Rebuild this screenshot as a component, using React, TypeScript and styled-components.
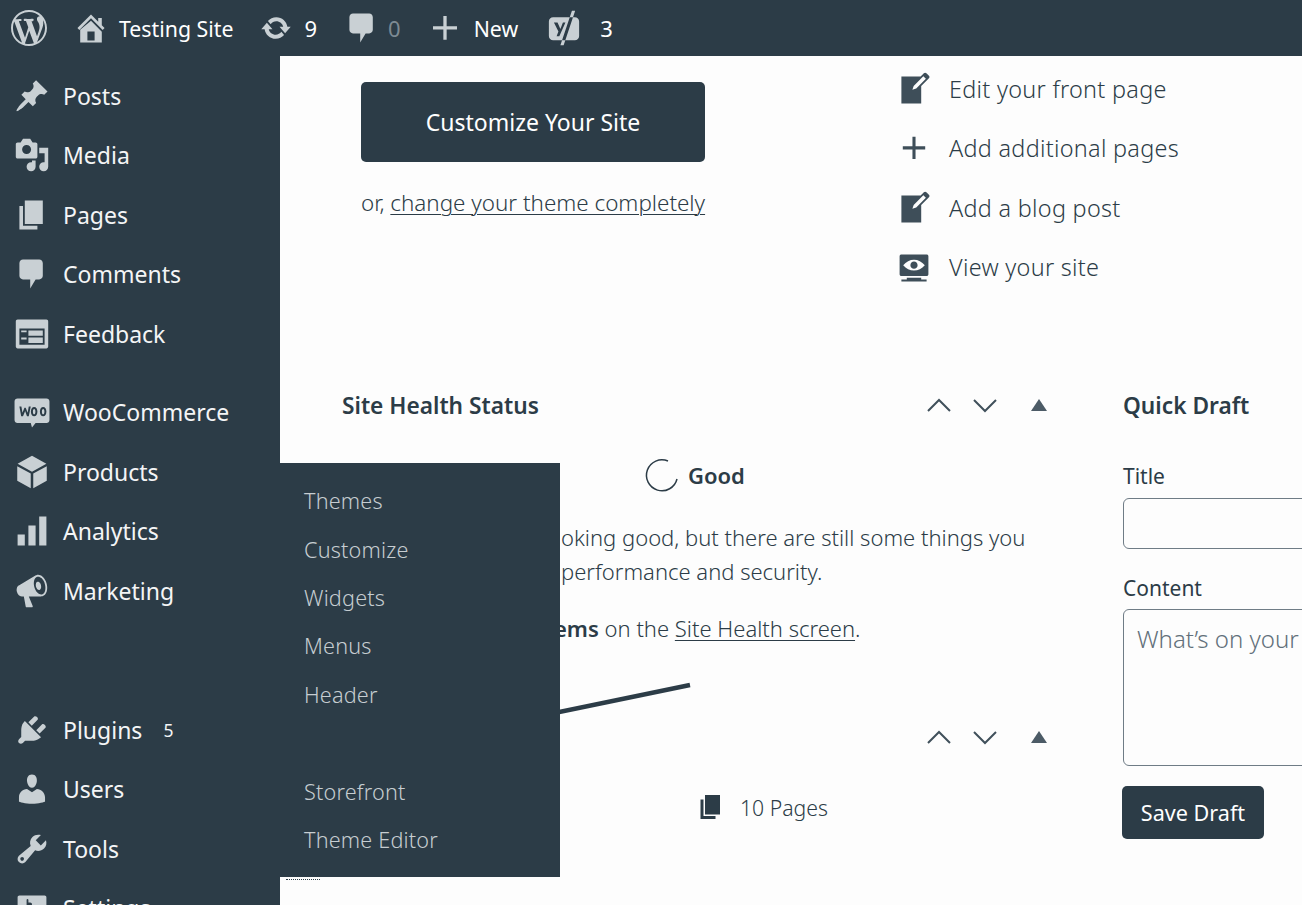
import React from "react";
import styled, { createGlobalStyle } from "styled-components";

const DARK = "#2c3c47";
const PAPER = "#fdfdfd";

const GlobalStyle = createGlobalStyle`
  html, body {
    margin: 0;
    padding: 0;
    height: 905px;
    overflow: hidden;
    background: ${PAPER};
    font-family: "Noto Sans", "Open Sans", sans-serif;
    color: ${DARK};
  }
  * { box-sizing: border-box; }
`;

const icons: Record<string, string> = {
  wp: "M20 10c0-5.51-4.49-10-10-10C4.48 0 0 4.49 0 10c0 5.52 4.48 10 10 10 5.51 0 10-4.48 10-10zM7.78 15.37L4.37 6.22c.55-.02 1.17-.08 1.17-.08.5-.06.44-1.13-.06-1.11 0 0-1.45.11-2.37.11-.18 0-.37 0-.58-.01C4.12 2.69 6.87 1.11 10 1.11c2.33 0 4.45.87 6.05 2.34-.68-.11-1.65.39-1.65 1.58 0 .74.45 1.36.9 2.1.35.61.55 1.36.55 2.46 0 1.49-1.4 5-1.4 5l-3.03-8.37c.54-.02.82-.17.82-.17.5-.05.44-1.25-.06-1.22 0 0-1.44.12-2.38.12-.87 0-2.33-.12-2.33-.12-.5-.03-.56 1.2-.06 1.22l.92.08 1.26 3.41zM17.41 10c.24-.64.74-1.87.43-4.25.7 1.29 1.05 2.71 1.05 4.25 0 3.29-1.73 6.24-4.4 7.78.97-2.59 1.94-5.2 2.92-7.78zM6.1 18.09C3.12 16.65 1.11 13.53 1.11 10c0-1.3.23-2.48.72-3.59C3.25 10.3 4.67 14.2 6.1 18.09zm4.03-6.63l2.58 6.98c-.86.29-1.76.45-2.71.45-.79 0-1.57-.11-2.29-.33.81-2.38 1.62-4.74 2.42-7.1z",
  home: "M16 8.5l1.53 1.53-1.06 1.06L10 4.62l-6.47 6.47-1.06-1.06L10 2.5l4 4v-2h2v4zm-6-2.46l6 5.99V18H4v-6.97zM12 17v-5H8v5h4z",
  update: "M10.2 3.28c3.53 0 6.43 2.61 6.92 6h2.08l-3.5 4-3.5-4h2.32c-.45-1.97-2.21-3.45-4.32-3.45-1.45 0-2.73.71-3.54 1.78L4.95 5.66C6.23 4.2 8.11 3.28 10.2 3.28zm-.4 13.44c-3.52 0-6.43-2.61-6.92-6H.8l3.5-4c1.17 1.33 2.33 2.67 3.5 4H5.48c.45 1.97 2.21 3.45 4.32 3.45 1.45 0 2.73-.71 3.54-1.78l1.71 1.95c-1.28 1.46-3.15 2.38-5.25 2.38z",
  comment: "M5 2h9c1.1 0 2 .9 2 2v7c0 1.1-.9 2-2 2h-2l-3 5v-5H5c-1.1 0-2-.9-2-2V4c0-1.1.9-2 2-2z",
  plus: "M18 8.8v2.2h-6.9v6.8H8.9V11H2V8.8h6.9V2h2.2v6.8z",
  yoast: "M4 4h12c1.4 0 2.4 1 2.4 2.4v8c0 1.4-1 2.4-2.4 2.4H4c-1.4 0-2.4-1-2.4-2.4v-8C1.6 5 2.6 4 4 4zM14.4.4h1.8L9.8 19.6H8zM4.4 7h2l1.6 3.6L9.4 7h1.4L7.4 14.6H5.9l1-2.6z",
  post: "M10.44 3.02l1.82-1.82 6.36 6.35-1.83 1.82c-1.05-.68-2.48-.57-3.41.36l-.75.75c-.92.93-1.04 2.35-.35 3.41l-1.83 1.82-2.41-2.41-2.8 2.79c-.42.42-3.38 2.71-3.8 2.29s1.86-3.39 2.28-3.81l2.79-2.79L4.1 9.36l1.83-1.82c1.05.69 2.48.57 3.4-.36l.75-.75c.93-.92 1.05-2.35.36-3.41z",
  media: "M13 11V4c0-.55-.45-1-1-1h-1.67L9 1H5L3.67 3H2c-.55 0-1 .45-1 1v7c0 .55.45 1 1 1h10c.55 0 1-.45 1-1zM7 4.5c1.38 0 2.5 1.12 2.5 2.5S8.38 9.5 7 9.5 4.5 8.38 4.5 7 5.62 4.5 7 4.5zM14 6h5v10.5c0 1.38-1.12 2.5-2.5 2.5S14 17.88 14 16.5s1.12-2.5 2.5-2.5c.17 0 .34.02.5.05V9h-3V6zm-4 8.05V13h2v3.5c0 1.38-1.12 2.5-2.5 2.5S7 17.88 7 16.5 8.12 14 9.5 14c.17 0 .34.02.5.05z",
  page: "M6 15V2h10v13H6zm-1 1h8v2H3V5h2v11z",
  feedback: "M2 2h16c.55 0 1 .45 1 1v14c0 .55-.45 1-1 1H2c-.55 0-1-.45-1-1V3c0-.55.45-1 1-1zm15 14V7H3v9h14zM4 8v1h3V8H4zm4 0v3h8V8H8zm-4 4v1h3v-1H4zm4 0v3h8v-3H8z",
  woo: "M2 2.5h16c1 0 1.7.7 1.7 1.7v10.2c0 1-.7 1.7-1.7 1.7h-6L10 18.6 9.3 16.1H2c-1 0-1.7-.7-1.7-1.7V4.2C.3 3.2 1 2.5 2 2.5zM3 7l1 5.4h1l1.2-3 1 3h1L9.3 7H8.2l-.6 3.4L6.5 7.6h-.7L4.7 10.4 4.1 7zm8.2.2c-1.1 0-1.8 1-1.8 2.5 0 1.6.7 2.7 1.8 2.7s1.8-1.1 1.8-2.7c0-1.5-.7-2.5-1.8-2.5zm0 1.1c.4 0 .7.6.7 1.5s-.3 1.5-.7 1.5-.7-.6-.7-1.5.3-1.5.7-1.5zm5 -1.1c-1.1 0-1.8 1-1.8 2.5 0 1.6.7 2.7 1.8 2.7s1.8-1.1 1.8-2.7c0-1.5-.7-2.5-1.8-2.5zm0 1.1c.4 0 .7.6.7 1.5s-.3 1.5-.7 1.5-.7-.6-.7-1.5.3-1.5.7-1.5z",
  products: "M10 1l8 4.4-8 4.4-8-4.4zM1.8 6.8l7.5 4.1V19l-7.5-4.1zM18.2 6.8v8.1L10.7 19v-8.1z",
  chart: "M18 18V2h-4v16h4zm-6 0V7H8v11h4zm-6 0v-6H2v6h4z",
  megaphone: "M18.15 5.94c.46 1.62.38 3.22-.02 4.48-.42 1.28-1.26 2.18-2.3 2.48-.16.06-.26.06-.4.06-.06.02-.12.02-.18.02-.06.02-.14.02-.22.02h-6.8l2.22 5.5c.02.14-.06.26-.14.34-.08.1-.24.16-.34.16H6.95c-.1 0-.26-.06-.34-.16-.08-.08-.16-.2-.14-.34l-1-5.5H4.25l-.02-.02c-.5.06-1.08-.18-1.54-.62s-.88-1.08-1.06-1.88c-.24-.8-.2-1.56-.02-2.2.18-.62.58-1.08 1.06-1.3l.02-.02 9-5.4c.1-.06.18-.1.24-.16.06-.04.14-.08.24-.12.16-.08.28-.12.5-.18 1.04-.3 2.24.1 3.22.98s1.84 2.24 2.26 3.86zm-2.58 5.98h-.02c.4-.1.74-.34 1.04-.7.58-.7.86-1.76.86-3.04-.02-.64-.1-1.3-.28-1.98-.34-1.36-1.02-2.5-1.78-3.24s-1.68-1.1-2.46-.88c-.82.22-1.4.96-1.7 2-.32 1.04-.28 2.36.06 3.72.38 1.36 1 2.5 1.8 3.24.78.74 1.62 1.1 2.48.88zm-2.54-7.08c.22-.04.42-.02.62.04.38.16.76.48 1.02 1s.42 1.2.42 1.78c0 .3-.04.56-.12.8-.18.48-.44.84-.86.94-.34.1-.8-.06-1.14-.4s-.64-.86-.78-1.5c-.18-.62-.12-1.24.02-1.72s.48-.84.82-.94z",
  plugin: "M13.11 4.36L9.87 7.6 8 5.73l3.24-3.24c.35-.34 1.05-.2 1.56.32.52.51.66 1.21.31 1.55zm-8 1.77l.91-1.12 9.01 9.01-1.19.84c-.71.71-2.63 1.16-3.82 1.16H6.14L4.9 17.26c-.59.59-1.54.59-2.12 0-.59-.58-.59-1.53 0-2.12l1.24-1.24v-3.88c0-1.13.4-3.19 1.09-3.89zm7.26 3.97l3.24-3.24c.34-.35 1.04-.21 1.55.31.52.51.66 1.21.31 1.55l-3.24 3.25z",
  users: "M10 9.25c-2.27 0-2.73-3.44-2.73-3.44C7 4.02 7.82 2 9.97 2c2.16 0 2.98 2.02 2.71 3.81 0 0-.41 3.44-2.68 3.44zm0 2.57L12.72 10c2.39 0 4.52 2.33 4.52 4.53v2.49s-3.65 1.13-7.24 1.13c-3.65 0-7.24-1.13-7.24-1.13v-2.49c0-2.25 1.94-4.48 4.47-4.48z",
  tools: "M16.68 9.77c-1.34 1.34-3.3 1.67-4.95.99l-5.41 6.52c-.99.99-2.59.99-3.58 0s-.99-2.59 0-3.57l6.52-5.42c-.68-1.65-.35-3.61.99-4.95 1.28-1.28 3.12-1.62 4.72-1.06l-2.89 2.89 2.82 2.82 2.86-2.87c.53 1.58.18 3.39-1.08 4.65zM3.81 16.21c.4.39 1.04.39 1.43 0 .4-.4.4-1.04 0-1.43-.39-.4-1.03-.4-1.43 0-.39.39-.39 1.03 0 1.43z",
  settings: "M18 16V4c0-.55-.45-1-1-1H3c-.55 0-1 .45-1 1v12c0 .55.45 1 1 1h14c.55 0 1-.45 1-1zM8 11h1c.55 0 1 .45 1 1s-.45 1-1 1H8v1.5c0 .28-.22.5-.5.5s-.5-.22-.5-.5V13H6c-.55 0-1-.45-1-1s.45-1 1-1h1V5.5c0-.28.22-.5.5-.5s.5.22.5.5V7h1c.55 0 1 .45 1 1s-.45 1-1 1h-1v5.5c0 .28-.22.5-.5.5s-.5-.22-.5-.5V9z",
  write: "M16.89 1.2l1.41 1.41c.39.39.39 1.02 0 1.41L14 8.33V18H3V3h10.67l1.8-1.8c.4-.39 1.03-.4 1.42 0zm-5.66 8.48l5.37-5.36-1.42-1.42-5.36 5.37-.71 2.12z",
  view: "M18 14V4c0-.55-.45-1-1-1H3c-.55 0-1 .45-1 1v10c0 .55.45 1 1 1h14c.55 0 1-.45 1-1zm-8-8c2.3 0 4.4 1.14 6 3-1.6 1.86-3.7 3-6 3s-4.4-1.14-6-3c1.6-1.86 3.7-3 6-3zm2 3c0-1.1-.9-2-2-2s-2 .9-2 2 .9 2 2 2 2-.9 2-2zm2 8h3v1H3v-1h3v-1h8v1z",
};

const Glyph = styled.svg<{ $size?: number }>`
  width: ${(p) => p.$size ?? 36}px;
  height: ${(p) => p.$size ?? 36}px;
  flex: none;
  fill: currentColor;
`;

const Icon = ({ name, size }: { name: string; size?: number }) => (
  <Glyph viewBox="0 0 20 20" $size={size} aria-hidden="true">
    <path fillRule="evenodd" d={icons[name]} />
  </Glyph>
);

const Page = styled.div`
  position: relative;
  width: 1302px;
  height: 905px;
  overflow: hidden;
  display: flex;
  flex-direction: column;
`;

const TopBar = styled.header`
  flex: none;
  height: 56px;
  padding-left: 11px;
  display: flex;
  align-items: center;
  background: ${DARK};
  color: #fff;
  font-size: 21.3px;
`;

const BarItem = styled.div<{ $gap?: number; $after: number }>`
  display: flex;
  align-items: center;
  gap: ${(p) => p.$gap ?? 10}px;
  margin-right: ${(p) => p.$after}px;
  color: #c9d0d4;
`;

const BarLabel = styled.span`
  color: #fff;
`;

const BarCount = styled.span<{ $dim?: boolean }>`
  min-width: 12px;
  color: ${(p) => (p.$dim ? "#7d8a93" : "#fff")};
  font-size: 22px;
`;

const Body = styled.div`
  flex: 1;
  min-height: 0;
  display: flex;
`;

const Sidebar = styled.nav`
  flex: none;
  width: 280px;
  padding: 9.8px 0 0 14px;
  background: ${DARK};
  overflow: hidden;
`;

const NavRow = styled.div<{ $top?: number }>`
  height: 59.5px;
  margin-top: ${(p) => p.$top ?? 0}px;
  display: flex;
  align-items: center;
  gap: 13px;
  color: #f4f5f6;
  font-size: 23px;
`;

const NavIconSlot = styled.span`
  display: flex;
  color: #c9d0d4;
`;

const NavBadge = styled.span`
  margin-left: 8px;
  font-size: 17.5px;
`;

const Flyout = styled.div`
  position: absolute;
  top: 463px;
  left: 280px;
  width: 280px;
  padding: 13.5px 0 13.5px 24px;
  background: ${DARK};
  z-index: 2;
`;

const FlyoutLink = styled.div<{ $top?: number }>`
  height: 48.4px;
  margin-top: ${(p) => p.$top ?? 0}px;
  display: flex;
  align-items: center;
  color: #c6cdd1;
  font-size: 21.6px;
  font-weight: 300;
  letter-spacing: 0.2px;
`;

const Main = styled.main`
  flex: 1;
  min-width: 0;
  display: flex;
  flex-direction: column;
  overflow: hidden;
  background: ${PAPER};
`;

const Welcome = styled.section`
  flex: none;
  height: 329px;
  display: flex;
`;

const WelcomeLeft = styled.div`
  width: 344px;
  margin-left: 81px;
  padding-top: 26px;
`;

const CustomizeButton = styled.button`
  display: block;
  width: 344px;
  height: 80px;
  border: 0;
  border-radius: 5px;
  background: ${DARK};
  color: #fff;
  font: inherit;
  font-size: 23px;
`;

const OrLine = styled.p`
  margin: 25px 0 0;
  font-size: 22.4px;
  font-weight: 300;
  line-height: 32px;
  white-space: nowrap;
`;

const TextLink = styled.a`
  color: ${DARK};
  text-decoration: underline;
  text-decoration-thickness: 1px;
  text-underline-offset: 3px;
`;

const ActionList = styled.ul`
  list-style: none;
  margin: 3.3px 0 0 191px;
  padding: 0;
`;

const ActionRow = styled.li`
  height: 59.4px;
  display: flex;
  align-items: center;
  gap: 17px;
  font-size: 23.4px;
  font-weight: 300;
  letter-spacing: 0.3px;
`;

const ActionIcon = styled.span`
  flex: none;
  width: 36px;
  display: flex;
  justify-content: center;
  color: #3e4e59;
`;

const Widgets = styled.section`
  flex: 1;
  display: flex;
  gap: 76px;
  padding-left: 62px;
`;

const HealthColumn = styled.div`
  flex: none;
  width: 705px;
`;

const WidgetHeader = styled.div`
  height: 40px;
  display: flex;
  align-items: center;
`;

const WidgetTitle = styled.h2`
  margin: 0;
  font-size: 22.7px;
  font-weight: 600;
`;

const HeaderControls = styled.div`
  margin-left: auto;
  display: flex;
  align-items: center;
  gap: 20px;
`;

const ControlGlyph = styled.svg`
  width: 26px;
  height: 18px;
  fill: none;
  stroke: #40505b;
  stroke-width: 2;
`;

const TriangleGlyph = styled.svg`
  width: 16px;
  height: 12px;
  margin-left: 13px;
  fill: #4c5b66;
`;

const GoodRow = styled.div`
  height: 40px;
  margin-top: 30px;
  padding-left: 302px;
  display: flex;
  align-items: center;
  gap: 8px;
  font-size: 22px;
  font-weight: 600;
`;

const Ring = styled.svg`
  width: 36px;
  height: 36px;
  fill: none;
  stroke: ${DARK};
  stroke-width: 1.5;
`;

const HealthText = styled.p<{ $top?: number; $inset: number }>`
  margin: ${(p) => p.$top ?? 0}px 0 0;
  padding-left: ${(p) => p.$inset}px;
  font-size: 22px;
  line-height: 34px;
  font-weight: 300;
  white-space: nowrap;
`;

const Strong = styled.strong`
  font-weight: 600;
`;

const ChartLine = styled.svg`
  display: block;
  width: 360px;
  height: 37px;
  margin-top: 35px;
  stroke: ${DARK};
  stroke-width: 4.5;
`;

const GlanceRow = styled.div`
  height: 40px;
  margin-top: 30px;
  padding-left: 354px;
  display: flex;
  align-items: center;
  gap: 14px;
  font-size: 21.2px;
  font-weight: 300;
`;

const DraftColumn = styled.div`
  flex: 1;
  min-width: 0;
`;

const FieldLabel = styled.label<{ $top: number }>`
  display: block;
  margin-top: ${(p) => p.$top}px;
  font-size: 21px;
  line-height: 30px;
`;

const TitleInput = styled.input`
  display: block;
  width: 400px;
  height: 51px;
  margin-top: 7px;
  border: 1px solid #6f7c86;
  border-radius: 6px;
  background: ${PAPER};
`;

const ContentInput = styled.textarea`
  display: block;
  width: 400px;
  height: 157px;
  margin-top: 6px;
  padding: 13px 13px;
  border: 1px solid #6f7c86;
  border-radius: 6px;
  background: ${PAPER};
  font: inherit;
  font-size: 24px;
  font-weight: 300;
  line-height: 32px;
  resize: none;
  &::placeholder {
    color: #62707a;
    opacity: 1;
  }
`;

const SaveButton = styled.button`
  display: block;
  width: 142px;
  height: 53px;
  margin: 20px 0 0 -1px;
  border: 0;
  border-radius: 5px;
  background: ${DARK};
  color: #fff;
  font: inherit;
  font-size: 21.6px;
`;

const ClippedMark = styled.div`
  position: absolute;
  top: 879px;
  left: 286px;
  width: 34px;
  height: 1px;
  border-top: 1px dotted ${DARK};
`;

const nav = [
  { label: "Posts", icon: "post" },
  { label: "Media", icon: "media" },
  { label: "Pages", icon: "page" },
  { label: "Comments", icon: "comment" },
  { label: "Feedback", icon: "feedback" },
  { label: "WooCommerce", icon: "woo", top: 19 },
  { label: "Products", icon: "products" },
  { label: "Analytics", icon: "chart" },
  { label: "Marketing", icon: "megaphone" },
  { label: "Plugins", icon: "plugin", top: 79.5, badge: "5" },
  { label: "Users", icon: "users" },
  { label: "Tools", icon: "tools" },
  { label: "Settings", icon: "settings" },
];

const flyout = [
  { label: "Themes" },
  { label: "Customize" },
  { label: "Widgets" },
  { label: "Menus" },
  { label: "Header" },
  { label: "Storefront", top: 48.4 },
  { label: "Theme Editor" },
];

const actions = [
  { label: "Edit your front page", icon: "write" },
  { label: "Add additional pages", icon: "plus", size: 28 },
  { label: "Add a blog post", icon: "write" },
  { label: "View your site", icon: "view" },
];

const Controls = () => (
  <HeaderControls>
    <ControlGlyph viewBox="0 0 26 18"><path d="M2 15 L13 4 L24 15" /></ControlGlyph>
    <ControlGlyph viewBox="0 0 26 18"><path d="M2 4 L13 15 L24 4" /></ControlGlyph>
    <TriangleGlyph viewBox="0 0 16 12"><path d="M8 0 L16 12 H0 Z" /></TriangleGlyph>
  </HeaderControls>
);

export default function App() {
  return (
    <Page>
      <GlobalStyle />
      <TopBar>
        <BarItem $after={26}><Icon name="wp" /></BarItem>
        <BarItem $after={27}><Icon name="home" /><BarLabel>Testing Site</BarLabel></BarItem>
        <BarItem $gap={12} $after={27}><Icon name="update" size={32} /><BarCount>9</BarCount></BarItem>
        <BarItem $gap={8} $after={29}><Icon name="comment" /><BarCount $dim>0</BarCount></BarItem>
        <BarItem $gap={14} $after={28}><Icon name="plus" size={30} /><BarLabel>New</BarLabel></BarItem>
        <BarItem $gap={18} $after={0}><Icon name="yoast" /><BarCount>3</BarCount></BarItem>
      </TopBar>
      <Body>
        <Sidebar>
          {nav.map((item) => (
            <NavRow key={item.label} $top={item.top}>
              <NavIconSlot><Icon name={item.icon} /></NavIconSlot>
              <span>{item.label}</span>
              {item.badge && <NavBadge>{item.badge}</NavBadge>}
            </NavRow>
          ))}
        </Sidebar>
        <Main>
          <Welcome>
            <WelcomeLeft>
              <CustomizeButton>Customize Your Site</CustomizeButton>
              <OrLine>or, <TextLink>change your theme completely</TextLink></OrLine>
            </WelcomeLeft>
            <ActionList>
              {actions.map((action) => (
                <ActionRow key={action.label}>
                  <ActionIcon><Icon name={action.icon} size={action.size} /></ActionIcon>
                  <span>{action.label}</span>
                </ActionRow>
              ))}
            </ActionList>
          </Welcome>
          <Widgets>
            <HealthColumn>
              <WidgetHeader>
                <WidgetTitle>Site Health Status</WidgetTitle>
                <Controls />
              </WidgetHeader>
              <GoodRow>
                <Ring viewBox="0 0 36 36"><path d="M24 4 A15.5 15.5 0 1 0 33 22" /></Ring>
                <span>Good</span>
              </GoodRow>
              <HealthText $top={25} $inset={219}>
                oking good, but there are still some things you<br />
                performance and security.
              </HealthText>
              <HealthText $top={23} $inset={212}>
                <Strong>ems</Strong> on the <TextLink>Site Health screen</TextLink>.
              </HealthText>
              <ChartLine viewBox="0 0 360 37"><line x1="198" y1="36" x2="348" y2="5" /></ChartLine>
              <WidgetHeader>
                <Controls />
              </WidgetHeader>
              <GlanceRow>
                <Icon name="page" size={30} />
                <span>10 Pages</span>
              </GlanceRow>
            </HealthColumn>
            <DraftColumn>
              <WidgetHeader><WidgetTitle>Quick Draft</WidgetTitle></WidgetHeader>
              <FieldLabel $top={36}>Title</FieldLabel>
              <TitleInput />
              <FieldLabel $top={24}>Content</FieldLabel>
              <ContentInput placeholder="What’s on your" />
              <SaveButton>Save Draft</SaveButton>
            </DraftColumn>
          </Widgets>
        </Main>
      </Body>
      <Flyout>
        {flyout.map((link) => (
          <FlyoutLink key={link.label} $top={link.top}>{link.label}</FlyoutLink>
        ))}
      </Flyout>
      <ClippedMark />
    </Page>
  );
}
